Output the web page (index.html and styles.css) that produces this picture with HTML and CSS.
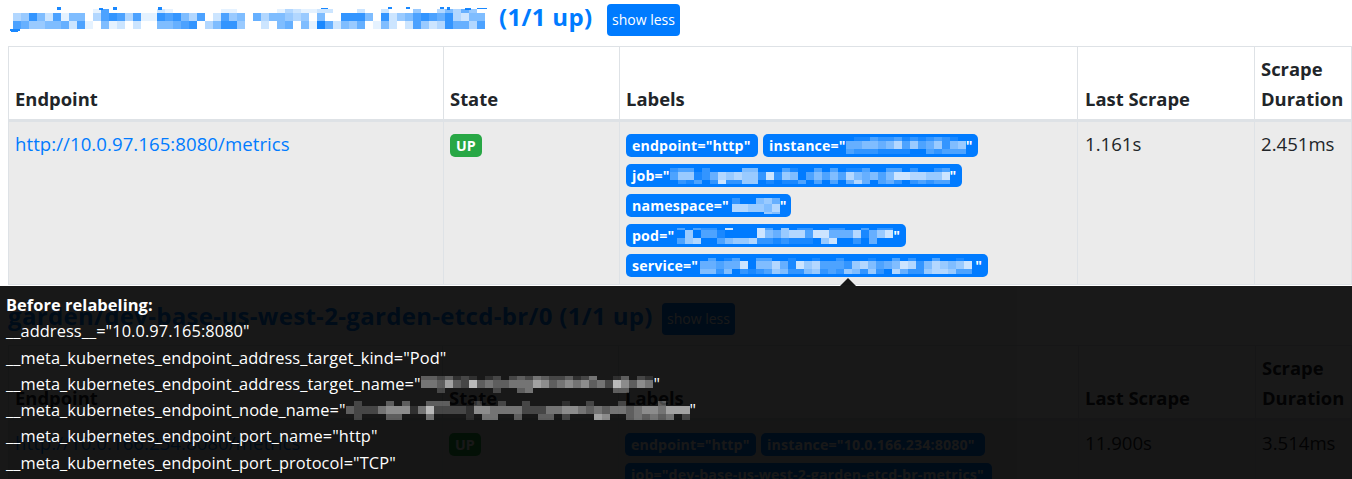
FILE: index.html
```html
<!DOCTYPE html>
<html lang="en">
<head>
<meta charset="utf-8">
<title>Targets</title>
<link rel="stylesheet" href="styles.css">
</head>
<body>
<main class="page">
  <section class="pool">
    <h2 class="pool-title">
      <svg class="mosaic title-mosaic" data-mosaic="title"></svg>
      <a class="pool-name">(1/1 up)</a>
      <button class="toggle">show less</button>
    </h2>
    <div class="targets">
      <div class="cell head"><span>Endpoint</span></div>
      <div class="cell head"><span>State</span></div>
      <div class="cell head"><span>Labels</span></div>
      <div class="cell head late"><span>Last Scrape</span></div>
      <div class="cell head last"><span>Scrape<br>Duration</span></div>
      <div class="cell"><a class="link">http://10.0.97.165:8080/metrics</a></div>
      <div class="cell"><span class="badge up">UP</span></div>
      <div class="cell labels">
        <span class="badge w-endpoint">endpoint="http"</span>
        <span class="badge w-instance"><span>instance="</span><svg class="mosaic" data-mosaic="instance"></svg><span class="quote">"</span></span>
        <span class="badge w-job"><span>job="</span><svg class="mosaic" data-mosaic="job"></svg><span class="quote">"</span></span>
        <span class="badge w-namespace"><span>namespace="</span><svg class="mosaic" data-mosaic="namespace"></svg><span class="quote">"</span></span>
        <span class="badge w-pod"><span>pod="</span><svg class="mosaic" data-mosaic="pod"></svg><span class="quote">"</span></span>
        <span class="badge w-service"><span>service="</span><svg class="mosaic" data-mosaic="service"></svg><span class="quote">"</span></span>
      </div>
      <div class="cell late">1.161s</div>
      <div class="cell last">2.451ms</div>
    </div>
  </section>

  <section class="pool second">
    <h2 class="pool-title">
      <a class="pool-name">garden/dev-base-us-west-2-garden-etcd-br/0 (1/1 up)</a>
      <button class="toggle">show less</button>
    </h2>
    <div class="targets">
      <div class="cell head"><span>Endpoint</span></div>
      <div class="cell head"><span>State</span></div>
      <div class="cell head"><span>Labels</span></div>
      <div class="cell head"><span>Last Scrape</span></div>
      <div class="cell head last"><span>Scrape<br>Duration</span></div>
      <div class="cell"><a class="link">http://10.0.166.234:8080/metrics</a></div>
      <div class="cell"><span class="badge up">UP</span></div>
      <div class="cell labels">
        <span class="badge w-endpoint">endpoint="http"</span>
        <span class="badge w-address">instance="10.0.166.234:8080"</span>
        <span class="badge w-metrics">job="dev-base-us-west-2-garden-etcd-br-metrics"</span>
      </div>
      <div class="cell">11.900s</div>
      <div class="cell last">3.514ms</div>
    </div>
  </section>

  <div class="tooltip">
    <div class="arrow"></div>
    <div class="tooltip-body">
      <div class="line strong">Before relabeling:</div>
      <div class="line">__address__="10.0.97.165:8080"</div>
      <div class="line">__meta_kubernetes_endpoint_address_target_kind="Pod"</div>
      <div class="line hidden-name"><span>__meta_kubernetes_endpoint_address_target_name="</span><svg class="mosaic" data-mosaic="target"></svg><span class="quote">"</span></div>
      <div class="line hidden-node"><span>__meta_kubernetes_endpoint_node_name="</span><svg class="mosaic" data-mosaic="node"></svg><span class="quote">"</span></div>
      <div class="line">__meta_kubernetes_endpoint_port_name="http"</div>
      <div class="line">__meta_kubernetes_endpoint_port_protocol="TCP"</div>
    </div>
  </div>
</main>
<script src="mosaic.js"></script>
</body>
</html>
```
FILE: mosaic.js
```js
// rows: [row height, one intensity digit per 8px column].
// specks: [x, y, width, height] solid fragments around the mosaic.
const mosaics = {
  title: {
    color: '#007bff',
    rows: [
      [4, '00000000001700000021000000110000013211220002002000400353640'],
      [8, '34852715503787371187853702745063554340500888508245787683255'],
      [8, '76445562710512020055678035884002056051962546015202742386637']
    ],
    specks: [
      [-3, 20, 10, 2], [-2, 22, 7, 1], [44, -2, 4, 3], [86, -1, 4, 2], [100, -2, 4, 3],
      [145, -2, 4, 3], [308, -1, 7, 1], [375, -2, 4, 2], [393, -2, 4, 2],
      [427, -2, 4, 2], [434, -2, 3, 3], [452, -1, 6, 2], [464, -1, 10, 1]
    ]
  },
  instance: { color: '#fff', rows: [
    [4, '011322312123210'],
    [8, '445545736346256'],
    [5, '322211110032333']
  ] },
  job: { color: '#fff', rows: [
    [4, '23302000055000310030301130033020023'],
    [8, '36612476766282650353537545358877668'],
    [4, '02130282266010113030304740342023233']
  ] },
  namespace: { color: '#fff', rows: [
    [6, '200564'],
    [8, '776657'],
    [2, '000065']
  ] },
  pod: { color: '#fff', rows: [
    [2, '303220800083060220022003022'],
    [8, '060331000085467738844471468'],
    [6, '367003566722121110680020400']
  ] },
  service: { color: '#fff', rows: [
    [3, '0301300330010010020001003020030010'],
    [8, '4434480557418673332675345872576568'],
    [5, '5525021236522562326526207422677633']
  ] },
  target: { color: '#fff', rows: [
    [4, '33231210120232432231240013021'],
    [8, '44363273433444653454534275354'],
    [5, '00200000020034000000000033000']
  ] },
  node: { color: '#fff', rows: [
    [5, '0200030300333000200200200001002000200003000'],
    [8, '3222455514722221554444222445543434434554666'],
    [6, '0200033000400001044003003302000650034343402']
  ] }
};

function addRect(svg, x, y, width, height, fill, opacity) {
  const r = document.createElementNS('http://www.w3.org/2000/svg', 'rect');
  Object.entries({ x, y, width, height, fill, 'fill-opacity': opacity })
    .forEach(([name, value]) => r.setAttribute(name, value));
  svg.appendChild(r);
}

document.querySelectorAll('[data-mosaic]').forEach(svg => {
  const { color, rows, specks = [] } = mosaics[svg.dataset.mosaic];
  let y = 0;
  rows.forEach(([height, digits]) => {
    [...digits].forEach((digit, i) => addRect(svg, i * 8, y, 8, height, color, digit / 10));
    y += height;
  });
  specks.forEach(([x, top, w, h]) => addRect(svg, x, top, w, h, color, 0.9));
  svg.setAttribute('width', rows[0][1].length * 8);
  svg.setAttribute('height', y);
});
```
FILE: styles.css
```css
* { box-sizing: border-box; }
body {
  margin: 0;
  overflow: hidden;
  background: #fff;
  color: #212529;
  font: 18.6px/30px "Open Sans", "Noto Sans", sans-serif;
}
.page { position: relative; height: 479px; overflow: hidden; padding-left: 8px; }
.pool { height: 299px; }
.pool-title {
  display: flex;
  align-items: flex-start;
  height: 46px;
  margin: 0;
  font-size: 24px;
  line-height: 34px;
  font-weight: 700;
}
.pool-name { color: #007bff; white-space: nowrap; width: 98px; margin-right: 10px; letter-spacing: 0.32px; }
.second .pool-name { width: 644px; }
.toggle {
  width: 73px;
  height: 32px;
  margin-top: 4px;
  padding: 0;
  border: 0;
  border-radius: 4px;
  background: #007bff;
  color: #fff;
  font: 14px/32px "Open Sans", sans-serif;
  white-space: nowrap;
}
.mosaic { display: block; flex: none; overflow: visible; shape-rendering: crispEdges; }
.title-mosaic { margin: 9px 6px 0 5px; width: 480px; }
.targets {
  display: grid;
  grid-template-columns: 435px 176px 458px 177px 98px;
  grid-template-rows: 76px 163px;
}
.second .targets { grid-template-columns: 434px 176px 460px 177px 97px; }
.cell {
  padding: 7px 0 0 6px;
  border-left: 1px solid #dee2e6;
  border-bottom: 1px solid #dee2e6;
  background: #ebebeb;
  white-space: nowrap;
}
.late { padding-left: 7px; }
.last { border-right: 1px solid #dee2e6; }
.head {
  display: flex;
  align-items: flex-end;
  padding-bottom: 5px;
  border-top: 1px solid #dee2e6;
  border-bottom: 3px solid #dee2e6;
  background: #fff;
  font-size: 18.4px;
  font-weight: 700;
}
.link { color: #007bff; letter-spacing: 0.06px; }
.labels { display: flex; flex-wrap: wrap; align-content: flex-start; gap: 7px 5px; padding: 12px 80px 0 6px; }
.badge {
  display: flex;
  align-items: center;
  height: 23px;
  padding: 0 6px;
  border-radius: 5px;
  background: #007bff;
  color: #fff;
  font-size: 14.2px;
  letter-spacing: 0.14px;
  line-height: 23px;
  font-weight: 700;
}
.up { width: 32px; margin-top: 5px; background: #28a745; }
.quote { margin-left: auto; }
.w-endpoint { width: 132px; }
.second .w-endpoint { width: 131px; }
.w-instance { width: 215px; }
.w-job { width: 336px; }
.w-namespace { width: 165px; }
.w-namespace .mosaic { margin-left: 3px; }
.w-pod { width: 280px; }
.w-pod .mosaic { margin-left: 3px; }
.w-service { width: 362px; }
.w-service .mosaic { margin-left: 2px; }
.w-address { width: 224px; }
.w-metrics { width: 367px; }
.tooltip { position: absolute; left: 0; top: 278px; width: 1352px; opacity: 0.9; }
.arrow {
  width: 16px;
  height: 8px;
  margin-left: 840px;
  background: #000;
  clip-path: polygon(50% 0, 100% 100%, 0 100%);
}
.tooltip-body {
  height: 193px;
  padding: 6px 6px 0;
  background: #000;
  color: #fff;
  font-size: 16.4px;
  letter-spacing: 0.07px;
}
.line { display: flex; align-items: center; height: 26.3px; line-height: 26.3px; white-space: nowrap; }
.strong { font-weight: 700; }
.hidden-name { width: 654px; }
.hidden-node { width: 688px; }
```
